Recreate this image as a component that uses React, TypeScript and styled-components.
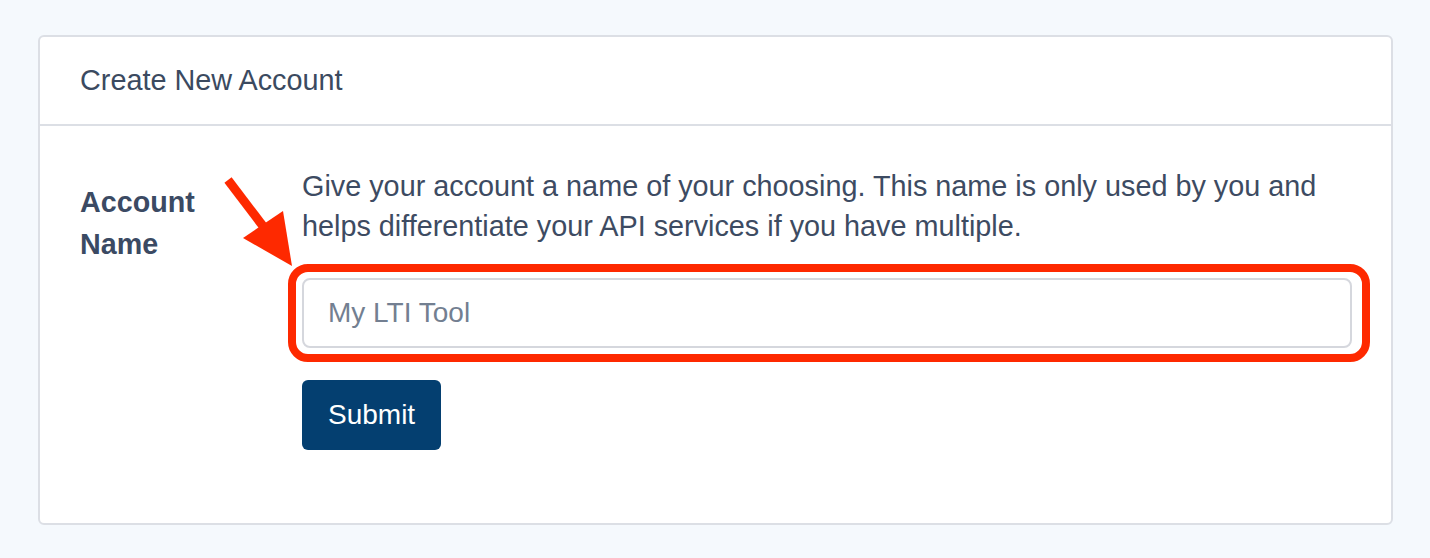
import React from 'react';
import styled, { createGlobalStyle } from 'styled-components';

const GlobalStyle = createGlobalStyle`
  html, body {
    margin: 0;
    padding: 0;
    background: #f5f9fd;
  }
  body {
    font-family: "Liberation Sans", Arial, Helvetica, sans-serif;
    color: #3b4a60;
  }
`;

const Page = styled.div`
  padding: 35px 37px 35px 38px;
`;

const Card = styled.section`
  background: #ffffff;
  border: 2px solid #dcdfe5;
  border-radius: 6px;
`;

const CardHeader = styled.header`
  height: 87px;
  display: flex;
  align-items: center;
  padding: 0 40px;
  border-bottom: 2px solid #dcdfe5;
`;

const Title = styled.h2`
  margin: 0;
  font-size: 28.8px;
  font-weight: 400;
  color: #3b4a60;
`;

const CardBody = styled.div`
  display: grid;
  grid-template-columns: 222px 1050px;
  padding: 40px 40px 73px 40px;
`;

const Label = styled.label`
  font-size: 28.7px;
  font-weight: 700;
  line-height: 42px;
  padding-top: 15px;
  color: #3b4a63;
  width: 140px;
`;

const Field = styled.div`
  position: relative;
  display: flex;
  flex-direction: column;
`;

const Help = styled.p`
  margin: 0 0 32px 0;
  font-size: 28.8px;
  line-height: 40px;
  color: #3d4b62;
`;

const InputWrap = styled.div`
  position: relative;
`;

const Input = styled.input`
  box-sizing: border-box;
  width: 100%;
  height: 70px;
  padding: 0 24px;
  border: 2px solid #d5d7dd;
  border-radius: 8px;
  font-family: inherit;
  font-size: 28px;
  color: #3b4a60;
  outline: none;
  &::placeholder {
    color: #737f91;
  }
`;

const Highlight = styled.div`
  position: absolute;
  left: -14px;
  top: -14px;
  right: -18px;
  bottom: -14px;
  border: 8px solid #fe2900;
  border-radius: 20px;
  pointer-events: none;
`;

const Arrow = styled.svg`
  position: absolute;
  left: -80px;
  top: -100px;
  width: 90px;
  height: 100px;
  overflow: visible;
`;

const Button = styled.button`
  align-self: flex-start;
  margin-top: 32px;
  height: 70px;
  padding: 0 26px;
  border: none;
  border-radius: 6px;
  background: #043f70;
  color: #ffffff;
  font-family: inherit;
  font-size: 28px;
  cursor: pointer;
`;

function App() {
  return (
    <Page>
      <GlobalStyle />
      <Card>
        <CardHeader>
          <Title>Create New Account</Title>
        </CardHeader>
        <CardBody>
          <Label htmlFor="account-name">Account Name</Label>
          <Field>
            <Help>
              Give your account a name of your choosing. This name is only used by you and helps
              differentiate your API services if you have multiple.
            </Help>
            <InputWrap>
              <Input id="account-name" placeholder="My LTI Tool" />
              <Highlight />
              {/* annotation arrow pointing at the field */}
              <Arrow viewBox="0 0 90 100">
                <line x1="6" y1="2" x2="50" y2="60" stroke="#fe2900" strokeWidth="9" />
                <polygon points="21,60 61,33 70,88" fill="#fe2900" />
              </Arrow>
            </InputWrap>
            <Button>Submit</Button>
          </Field>
        </CardBody>
      </Card>
    </Page>
  );
}

export default App;
